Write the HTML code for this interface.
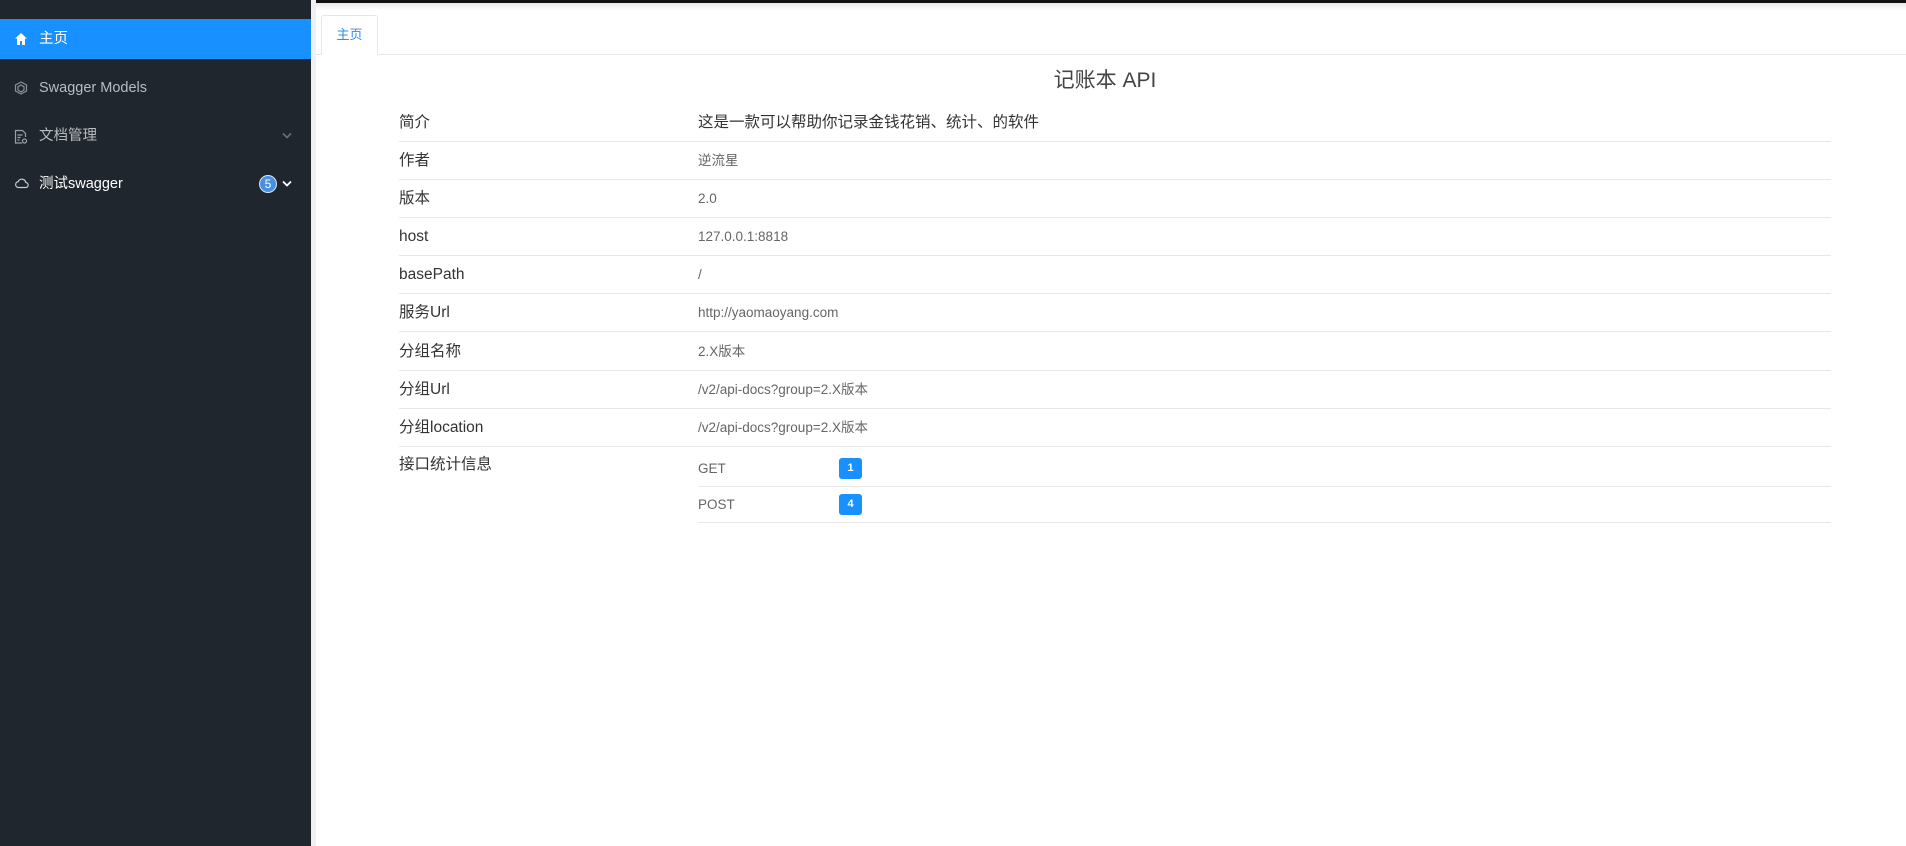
<!DOCTYPE html>
<html><head><meta charset="utf-8"><style>
*{margin:0;padding:0;box-sizing:border-box}
body{width:1906px;height:846px;overflow:hidden;background:#fff;font-family:"Liberation Sans","Noto Sans CJK SC",sans-serif;position:relative}
.sb{position:absolute;left:0;top:0;width:311px;height:846px;background:#1f262d}
.strip{position:absolute;left:311px;top:0;width:5px;height:846px;background:#eef0f3}
.item{position:absolute;left:0;width:311px;height:40px;color:#b8bcc1;font-size:14.5px;line-height:40px;padding-left:39px}
.item svg{position:absolute;left:14px;top:13px}
.active{background:#1890ff;color:#fff;top:19px}
.topbar{position:absolute;left:316px;top:0;right:0;height:3px;background:#111}
.topsh{position:absolute;left:316px;top:3px;right:0;height:7px;background:linear-gradient(#e8e8e8,#fff)}
.tabline{position:absolute;left:316px;top:54px;right:0;height:1px;background:#e6e6e6}
.tab{position:absolute;left:321px;top:15px;width:57px;height:40px;border:1px solid #e6e6e6;border-bottom:1px solid #fff;background:#fff;color:#2d8cf0;font-size:13px;line-height:38px;text-align:center;border-radius:3px 3px 0 0}
.title{position:absolute;left:316px;right:0;top:64px;text-align:center;font-size:21px;color:#444;padding-right:12px}
.row{position:absolute;left:399px;width:1432px;height:38px;border-bottom:1px solid #e8e8e8}
.row .l{position:absolute;left:0;top:0;line-height:38px;font-size:15.5px;color:#333}
.row .v{position:absolute;left:299px;top:0;line-height:38px;font-size:13.5px;color:#666}
.sub{position:absolute;left:698px;width:1133px;height:36px;border-bottom:1px solid #e8e8e8;font-size:13.5px;color:#666;line-height:36px}
.badge{position:absolute;left:141px;top:7px;width:23px;height:21px;background:#1890ff;color:#fff;border-radius:3px;font-size:11px;font-weight:bold;text-align:center;line-height:21px}
</style></head><body>
<div class="sb">
 <div class="item active"><svg width="14" height="14" viewBox="0 0 14 14"><path d="M7 1L1 6.5h2V13h3V9h2v4h3V6.5h2z" fill="#fff"/></svg>主页</div>
 <div class="item" style="top:68px"><svg width="14" height="14" viewBox="0 0 14 14" fill="none" stroke="#8a9097" stroke-width="1.2"><path d="M7 1l5.5 3v6L7 13 1.5 10V4z"/><path d="M7 4l3 1.7v3.4L7 11 4 9.1V5.7z"/></svg>Swagger Models</div>
 <div class="item" style="top:116px"><svg width="14" height="16" viewBox="0 0 14 16" fill="none" stroke="#9aa0a6" stroke-width="1.2"><path d="M8 14H1.5V1.5h7l3 3V8"/><path d="M3.5 6h5M3.5 8.5h3M3.5 11h2"/><circle cx="10.5" cy="12" r="2"/></svg>文档管理<svg style="left:282px;top:16px" width="10" height="8" viewBox="0 0 10 8"><path d="M1 1.5l4 4 4-4" stroke="#6b7278" stroke-width="1.6" fill="none"/></svg></div>
 <div class="item" style="top:164px;color:#fff"><svg width="15" height="12" viewBox="0 0 15 12" fill="none" stroke="#c8ccd0" stroke-width="1.2"><path d="M4 10.5h7.5a2.5 2.5 0 0 0 .3-5A4 4 0 0 0 4.2 4.6 3 3 0 0 0 4 10.5z"/></svg>测试swagger<span style="position:absolute;left:259px;top:11px;width:18px;height:18px;border-radius:50%;background:#4a90e2;border:1px solid #d8e6f5;color:#fff;font-size:12px;line-height:16px;text-align:center">5</span><svg style="left:282px;top:16px" width="10" height="8" viewBox="0 0 10 8"><path d="M1 1.5l4 4 4-4" stroke="#fff" stroke-width="1.8" fill="none"/></svg></div>
</div>
<div class="strip"></div>
<div class="topbar"></div><div class="topsh"></div>
<div class="tabline"></div>
<div class="tab">主页</div>
<div class="title">记账本 API</div>
<div class="row" style="top:104px"><span class="l">简介</span><span class="v" style="font-size:15.5px;color:#333">这是一款可以帮助你记录金钱花销、统计、的软件</span></div>
<div class="row" style="top:142px"><span class="l">作者</span><span class="v">逆流星</span></div>
<div class="row" style="top:180px"><span class="l">版本</span><span class="v">2.0</span></div>
<div class="row" style="top:218px"><span class="l">host</span><span class="v">127.0.0.1:8818</span></div>
<div class="row" style="top:256px"><span class="l">basePath</span><span class="v">/</span></div>
<div class="row" style="top:294px"><span class="l">服务Url</span><span class="v">http://yaomaoyang.com</span></div>
<div class="row" style="top:333px"><span class="l">分组名称</span><span class="v">2.X版本</span></div>
<div class="row" style="top:371px"><span class="l">分组Url</span><span class="v">/v2/api-docs?group=2.X版本</span></div>
<div class="row" style="top:409px"><span class="l">分组location</span><span class="v">/v2/api-docs?group=2.X版本</span></div>
<div style="position:absolute;left:399px;top:450px;font-size:15.5px;color:#333;line-height:30px">接口统计信息</div>
<div class="sub" style="top:451px">GET<span class="badge">1</span></div>
<div class="sub" style="top:487px">POST<span class="badge">4</span></div>
</body></html>
